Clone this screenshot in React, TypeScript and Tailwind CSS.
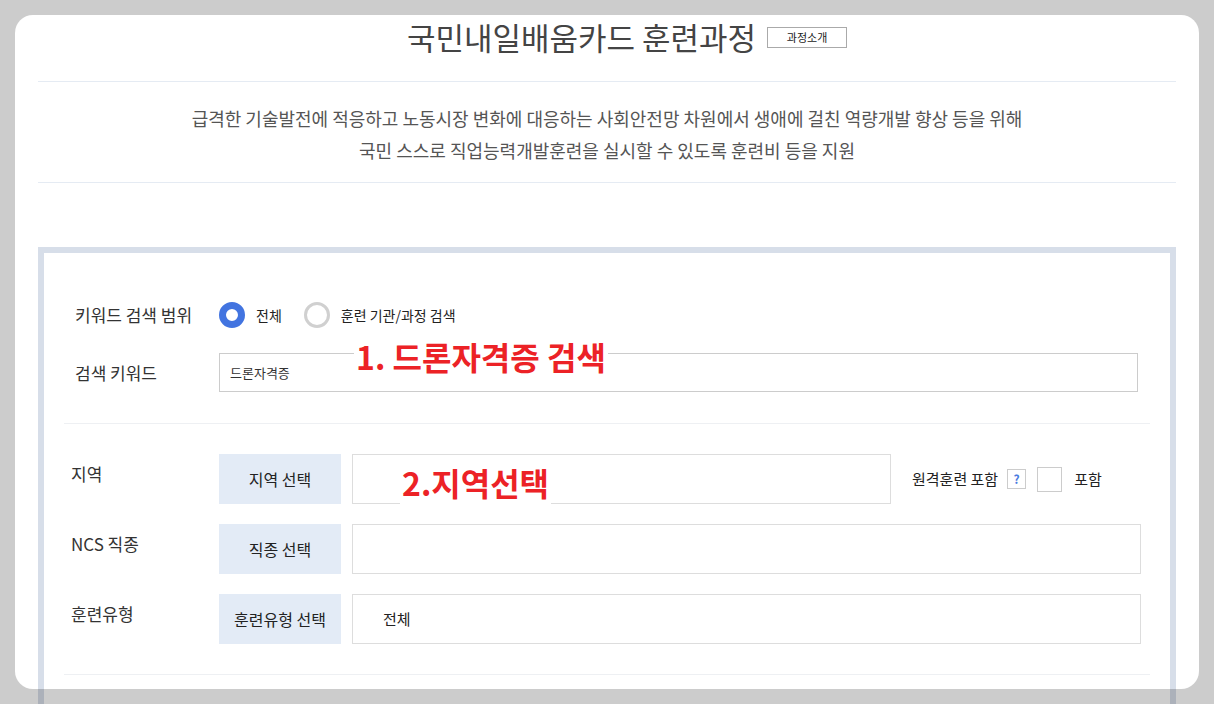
import React from 'react'

const FONT = "font-['Noto_Sans_CJK_KR','Noto_Sans',sans-serif]"

function Radio({ checked, label }: { checked?: boolean; label: string }) {
  return (
    <div className="flex items-center">
      {checked ? (
        <span className="w-[26px] h-[26px] rounded-full border-[7px] border-[#4274e0] bg-white" />
      ) : (
        <span className="w-[26px] h-[26px] rounded-full border-[3px] border-[#d0d0d0] bg-white" />
      )}
      <span className="ml-[11px] text-[14px] text-[#222]">{label}</span>
    </div>
  )
}

function Annotation({ text, className }: { text: string; className: string }) {
  return (
    <span
      className={`absolute bg-white px-[2px] text-[32px] leading-[38px] font-bold text-[#ec2226] whitespace-nowrap ${className}`}
    >
      {text}
    </span>
  )
}

function SelectRow({
  label,
  button,
  children,
}: {
  label: string
  button: string
  children: React.ReactNode
}) {
  return (
    <div className="flex items-start h-[50px]">
      <div className="w-[155px] shrink-0 pl-[7px] pt-[8px] text-[17px] leading-[24px] text-[#333]">{label}</div>
      <div className="w-[122px] h-[50px] shrink-0 bg-[#e3ebf6] flex items-center justify-center text-[16px] text-[#222]">
        {button}
      </div>
      {children}
    </div>
  )
}

export default function App() {
  return (
    <div className={`relative w-[1214px] h-[704px] overflow-hidden bg-white ${FONT}`}>
      <div className="pt-[15px] px-[38px]">
        {/* Title */}
        <div className="h-[66px] flex justify-center items-start pt-[1px] pl-[40px]">
          <div className="flex items-center">
            <h1 className="text-[31px] leading-[42px] text-[#444]">
              국민내일배움카드 훈련과정
            </h1>
            <button className="ml-[11px] w-[80px] h-[21px] border border-[#aaaaaa] text-[11px] leading-[19px] text-[#222] bg-white">
              과정소개
            </button>
          </div>
        </div>

        {/* Description */}
        <div className="border-t border-b border-[#e5ebf3] pt-[20px] pb-[16px] text-center text-[18px] leading-[32px] text-[#555]">
          <p>급격한 기술발전에 적응하고 노동시장 변화에 대응하는 사회안전망 차원에서 생애에 걸친 역량개발 향상 등을 위해</p>
          <p>국민 스스로 직업능력개발훈련을 실시할 수 있도록 훈련비 등을 지원</p>
        </div>

        {/* Search panel */}
        <div className="mt-[64px] border-[6px] border-[#d7dee9] px-[20px] h-[600px]">
          {/* Keyword section */}
          <div className="pt-[49px] pb-[31px] border-b border-[#eef0f3]">
            <div className="flex items-center h-[26px]">
              <div className="w-[155px] shrink-0 pl-[11px] text-[17px] text-[#333]">키워드 검색 범위</div>
              <Radio checked label="전체" />
              <div className="ml-[22px]">
                <Radio label="훈련 기관/과정 검색" />
              </div>
            </div>
            <div className="flex items-center mt-[25px]">
              <div className="w-[155px] shrink-0 pl-[11px] text-[17px] text-[#333]">검색 키워드</div>
              <div className="relative w-[919px] h-[39px] border border-[#cccccc] flex items-center pl-[10px] text-[13px] text-[#333]">
                드론자격증
                <Annotation text="1. 드론자격증 검색" className="left-[134px] top-[-17px]" />
              </div>
            </div>
          </div>

          {/* Filter section */}
          <div className="pt-[30px] pb-[30px] border-b border-[#eef0f3] flex flex-col gap-[20px]">
            <SelectRow label="지역" button="지역 선택">
              <div className="relative ml-[11px] w-[539px] h-[50px] shrink-0 border border-[#dddddd]">
                <Annotation text="2.지역선택" className="left-[47px] top-[8px] pb-[6px]" />
              </div>
              <div className="h-[50px] flex items-center">
                <span className="ml-[21px] text-[15px] text-[#222]">원격훈련 포함</span>
                <span className="ml-[9px] w-[19px] h-[20px] border border-[#cccccc] flex items-center justify-center text-[12px] font-bold text-[#4a7be0]">
                  ?
                </span>
                <span className="ml-[11px] w-[25px] h-[25px] border border-[#cccccc] bg-white" />
                <span className="ml-[12px] text-[15px] text-[#222]">포함</span>
              </div>
            </SelectRow>
            <SelectRow label="NCS 직종" button="직종 선택">
              <div className="ml-[11px] w-[789px] h-[50px] shrink-0 border border-[#dddddd]" />
            </SelectRow>
            <SelectRow label="훈련유형" button="훈련유형 선택">
              <div className="ml-[11px] w-[789px] h-[50px] shrink-0 border border-[#dddddd] flex items-center pl-[30px] text-[15px] text-[#222]">
                전체
              </div>
            </SelectRow>
          </div>
        </div>
      </div>

      {/* Gray frame overlay with rounded window */}
      <div className="pointer-events-none absolute left-[15px] top-[15px] w-[1184px] h-[674px] rounded-[18px] shadow-[0_0_0_900px_rgba(0,0,0,0.2)]" />
    </div>
  )
}
